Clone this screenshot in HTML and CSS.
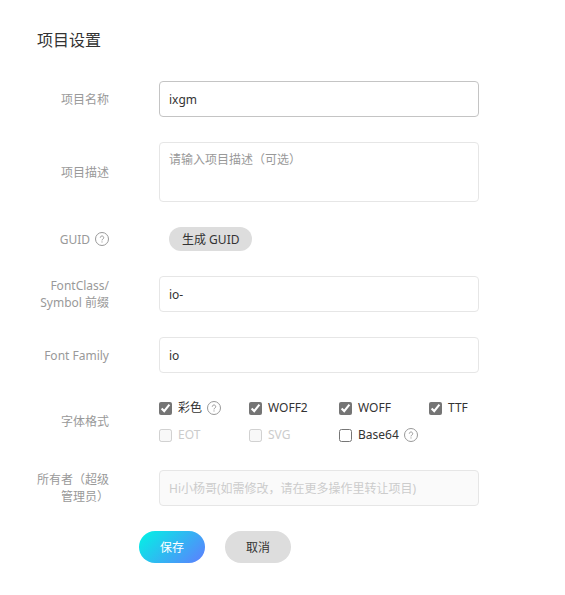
FILE: index.html
```html
<!DOCTYPE html>
<html lang="zh-CN">
<head>
  <meta charset="UTF-8" />
  <meta name="viewport" content="width=device-width, initial-scale=1" />
  <title>项目设置</title>
  <link rel="stylesheet" href="styles.css">
</head>
<body>

  <div class="container">
    <h2>项目设置</h2>
    <form id="projectForm">
      <div class="form-group">
        <label class="form-label" for="projectName">项目名称</label>
        <div class="form-field">
          <input type="text" class="text-input active" id="projectName" value="ixgm">
        </div>
      </div>

      <div class="form-group">
        <label class="form-label" for="projectDesc">项目描述</label>
        <div class="form-field">
          <textarea class="text-input" id="projectDesc" placeholder="请输入项目描述（可选）"></textarea>
        </div>
      </div>

      <div class="form-group">
        <label class="form-label with-help" for="createGuid">
          GUID
          <svg class="help" viewBox="0 0 14 14"><circle cx="7" cy="7" r="6.5"/><path d="M5.3 5.7a1.7 1.7 0 1 1 2.6 1.4c-.6.4-.9.6-.9 1.3M7 9.4v1.1"/></svg>
        </label>
        <div class="form-field">
          <button type="button" class="btn btn-small" id="createGuid">生成 GUID</button>
        </div>
      </div>

      <div class="form-group">
        <label class="form-label" for="prefix">FontClass/<br>Symbol 前缀</label>
        <div class="form-field">
          <input type="text" class="text-input" id="prefix" value="io-">
        </div>
      </div>

      <div class="form-group">
        <label class="form-label" for="fontFamily">Font Family</label>
        <div class="form-field">
          <input type="text" class="text-input" id="fontFamily" value="io">
        </div>
      </div>

      <div class="form-group" role="group" aria-labelledby="formatLabel">
        <span class="form-label" id="formatLabel">字体格式</span>
        <div class="form-field format-list">
          <label class="check">
            <input type="checkbox" checked>彩色
            <svg class="help" viewBox="0 0 14 14"><circle cx="7" cy="7" r="6.5"/><path d="M5.3 5.7a1.7 1.7 0 1 1 2.6 1.4c-.6.4-.9.6-.9 1.3M7 9.4v1.1"/></svg>
          </label>
          <label class="check"><input type="checkbox" checked>WOFF2</label>
          <label class="check"><input type="checkbox" checked>WOFF</label>
          <label class="check"><input type="checkbox" checked>TTF</label>
          <label class="check disabled"><input type="checkbox" disabled>EOT</label>
          <label class="check disabled"><input type="checkbox" disabled>SVG</label>
          <label class="check">
            <input type="checkbox">Base64
            <svg class="help" viewBox="0 0 14 14"><circle cx="7" cy="7" r="6.5"/><path d="M5.3 5.7a1.7 1.7 0 1 1 2.6 1.4c-.6.4-.9.6-.9 1.3M7 9.4v1.1"/></svg>
          </label>
        </div>
      </div>

      <div class="form-group">
        <label class="form-label" for="owner">所有者（超级管理员）</label>
        <div class="form-field">
          <input type="text" class="text-input" id="owner" value="Hi小杨哥(如需修改，请在更多操作里转让项目)" disabled>
        </div>
      </div>

      <div class="actions">
        <button type="submit" class="btn btn-primary">保存</button>
        <button type="button" class="btn">取消</button>
      </div>
    </form>
  </div>

</body>
</html>
```
FILE: styles.css
```css
* {
  box-sizing: border-box;
}

body {
  font-family: "Noto Sans", "Noto Sans CJK SC", sans-serif;
  font-size: 12px;
  color: #333;
  background: #fff;
  margin: 0;
}

input, textarea, button {
  font-family: inherit;
  font-size: 12px;
  color: #333;
}

.container {
  padding: 28px 37px;
}

h2 {
  margin: 0 0 29px;
  font-size: 16px;
  font-weight: normal;
  line-height: 24px;
}

.form-group {
  display: flex;
  align-items: center;
  gap: 50px;
  margin-bottom: 25px;
}

.form-label {
  flex: none;
  width: 72px;
  line-height: 17px;
  text-align: right;
  color: #999;
}

.with-help {
  display: flex;
  align-items: center;
  justify-content: flex-end;
  gap: 5px;
}

.form-field {
  display: flex;
  flex: 1;
  max-width: 320px;
}

.text-input {
  width: 100%;
  height: 36px;
  padding: 0 9px;
  border: 1px solid #e6e6e6;
  border-radius: 4px;
  background: #fff;
  outline: none;
}

.text-input.active {
  border-color: #c4c4c4;
}

.text-input::placeholder {
  color: #999;
}

.text-input:disabled {
  background: #fafafa;
  color: #ccc;
}

textarea.text-input {
  height: 60px;
  padding: 8px 9px;
  line-height: 18px;
  resize: none;
}

.help {
  flex: none;
  width: 14px;
  height: 14px;
  fill: none;
  stroke: #999;
}

.format-list {
  display: grid;
  grid-template-columns: repeat(3, 90px) 1fr;
  row-gap: 7px;
}

.check {
  display: flex;
  align-items: center;
  gap: 5px;
  line-height: 20px;
}

.check input {
  flex: none;
  width: 13px;
  height: 13px;
  margin: 0 1px 0 0;
  accent-color: #757575;
}

.check.disabled {
  color: #ccc;
}

.btn {
  height: 32px;
  padding: 0 21px;
  border: none;
  border-radius: 16px;
  background: #ddd;
  cursor: pointer;
}

.btn-small {
  height: 24px;
  margin-left: 10px;
  padding: 0 13px;
}

.btn-primary {
  background: linear-gradient(135deg, #00f5e4, #5f7cff);
  color: #fff;
}

.actions {
  display: flex;
  gap: 20px;
  padding-left: 102px;
}
```
